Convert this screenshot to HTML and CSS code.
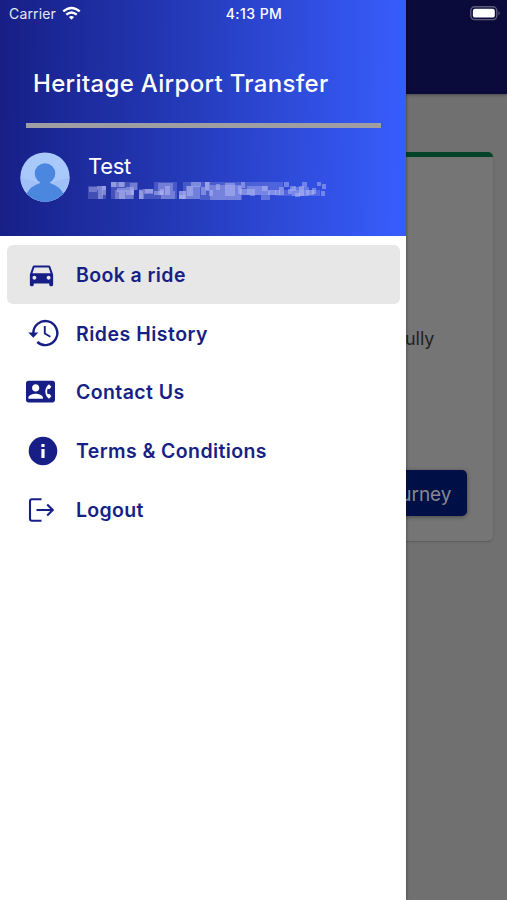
FILE: index.html
```html
<!DOCTYPE html>
<html lang="en">
<head>
<meta charset="utf-8">
<title>Heritage Airport Transfer</title>
<link rel="stylesheet" href="styles.css">
</head>
<body>
<main class="page">
  <div class="navbar"></div>
  <section class="card">
    <p class="message">ully</p>
    <div class="journey">urney</div>
  </section>
</main>
<aside class="drawer">
  <header class="drawer-header">
    <h1 class="title">Heritage Airport Transfer</h1>
    <div class="divider"></div>
    <div class="profile">
      <svg class="avatar" viewBox="0 0 50 50">
        <defs><clipPath id="round"><circle cx="25" cy="25" r="24.6"/></clipPath></defs>
        <g clip-path="url(#round)">
          <rect width="50" height="50" fill="#a9c9fb"/>
          <path d="M0 25L25 33L50 25V50H0Z" fill="#9fc1f7"/>
          <path d="M20 26H30V31Q40 34 44 43V50H6V43Q10 34 20 31Z" fill="#4c87df"/>
          <circle cx="25" cy="21.500" r="10.300" fill="#4c87df"/>
        </g>
      </svg>
      <div class="identity">
        <div class="name">Test</div>
        <svg class="masked" viewBox="0 0 240 20" shape-rendering="crispEdges">
          <g fill="#b3b9f2">
            <path opacity=".25" d="M0 5h18v13H0zM23 1h22v17H23zM43 1h7v8h-7zM51 8h22v10H51zM66 1h23v17H66zM95 1h22v17H95zM112 1h42v18H112zM154 1h41v13H154zM188 9h44v6H188z"/>
            <path opacity=".4" d="M1 6h8v5H1zM23 1h14v5H23zM27 9h19v9H27zM42 2h7v7h-7zM51 10h5v8H51zM55 8h10v5H55zM70 2h15v12H70zM73 10h14v8H73zM91 10h21v8H91zM98 5h14v10H98zM122 4h31v15H122zM159 5h20v9H159zM173 10h9v9H173zM204 6h17v9H204z"/>
            <path opacity=".5" d="M9 5h9v4H9zM10 5h5v13h-5zM23 1h5v5H23zM29 7h9v4H29zM31 10h6v8H31zM38 6h8v8H38zM51 9h4v9H51zM57 8h8v4H57zM66 10h9v4H66zM77 5h5v9H77zM91 10h7v8H91zM99 5h6v10H99zM103 1h10v5H103zM113 6h5v8H113zM117 1h5v9H117zM121 9h4v6H121zM137 2h10v13H137zM152 8h10v6H152zM162 8h5v7H162zM174 5h6v5H174zM180 9h8v5H180zM191 6h5v8H191zM202 5h6v5H202zM211 5h5v10H211zM218 9h8v5H218z"/>
            <path opacity=".5" d="M14 5h4v9H14zM31 1h5v5H31zM43 9h3v5H43zM72 8h4v6H72zM91 14h6v4H91zM117 1h4v8H117zM128 3h4v6H128zM150 5h4v8H150zM153 1h4v6H153zM187 9h5v5H187zM196 1h5v5H196zM200 8h4v5H200zM207 12h5v4H207zM214 1h5v5H214zM224 7h4v6H224zM229 1h4v4H229zM234 3h4v5H234zM233 10h4v5H233z"/>
          </g>
        </svg>
      </div>
    </div>
  </header>
  <nav class="menu">
    <a class="item active">
      <svg class="icon car" viewBox="0 0 24 24"><path fill-rule="evenodd" d="M18.920 6.010C18.720 5.420 18.160 5 17.500 5h-11c-.66 0-1.210.42-1.420 1.010L3 12v8c0 .55.45 1 1 1h1c.55 0 1-.45 1-1v-1h12v1c0 .55.45 1 1 1h1c.55 0 1-.45 1-1v-8l-2.080-5.990zM6.500 16c-.83 0-1.500-.67-1.500-1.500S5.670 13 6.500 13s1.500.67 1.500 1.500S7.330 16 6.500 16zm11 0c-.83 0-1.500-.67-1.500-1.500s.67-1.500 1.500-1.500 1.500.67 1.500 1.500-.67 1.500-1.500 1.500zM5 11l1.500-4.500h11L19 11H5z"/></svg>
      <span class="label book">Book a ride</span>
    </a>
    <a class="item">
      <svg class="icon history" viewBox="0 0 32 30"><path d="M5.300 15A12 12 0 1 1 9.300 24" fill="none" stroke="currentColor" stroke-width="2.400"/><path d="M.3 14.500H10.300L5.300 19.800Z"/><path d="M16.800 8V15.500L22.400 18.800" fill="none" stroke="currentColor" stroke-width="1.900"/></svg>
      <span class="label rides">Rides History</span>
    </a>
    <a class="item">
      <svg class="icon contact" viewBox="0 0 24 24"><path fill-rule="evenodd" d="M22 3H2C.9 3 0 3.900 0 5v14c0 1.100.9 2 2 2h20c1.100 0 1.990-.9 1.990-2L24 5c0-1.100-.9-2-2-2zM8 6c1.660 0 3 1.340 3 3s-1.340 3-3 3-3-1.340-3-3 1.340-3 3-3zm6 12H2v-1c0-2 4-3.100 6-3.100s6 1.100 6 3.100v1zm3.850-4h1.640L21 16l-1.990 1.990c-1.310-.98-2.280-2.380-2.730-3.990-.18-.64-.28-1.310-.28-2s.1-1.360.28-2c.45-1.620 1.420-3.010 2.730-3.990L21 8l-1.510 2h-1.640c-.22.630-.35 1.300-.35 2s.13 1.370.35 2z"/></svg>
      <span class="label us">Contact Us</span>
    </a>
    <a class="item">
      <svg class="icon info" viewBox="0 0 30 30"><circle cx="15" cy="15" r="14.300"/><path d="M13.400 8h3.200v3h-3.200zM13.400 13h3.200v9h-3.200z" fill="#fff"/></svg>
      <span class="label terms">Terms &amp; Conditions</span>
    </a>
    <a class="item">
      <svg class="icon logout" viewBox="0 0 26 26" fill="none"><path d="M13.500 2.200H4Q2 2.200 2 4.200V21.800Q2 23.800 4 23.800H13.500" stroke="currentColor" stroke-width="2.100"/><path d="M8.500 13H25M19.200 7.500L24.800 13L19.200 18.500" stroke="currentColor" stroke-width="2.100"/></svg>
      <span class="label out">Logout</span>
    </a>
  </nav>
</aside>
<div class="status">
  <div class="carrier"><span>Carrier</span>
    <svg class="wifi" viewBox="0 0 20 15"><g fill="none" stroke="#fff" stroke-width="2.500"><path d="M1.300 5.300Q10-2 18.700 5.300"/><path d="M4.500 8.700Q10 4.100 15.500 8.700"/></g><path d="M7.200 11.100Q10 8.900 12.800 11.100L10 14Z" fill="#fff"/></svg>
  </div>
  <div class="time">4:13 PM</div>
  <svg class="battery" viewBox="0 0 31 15"><rect x=".8" y=".8" width="26" height="12.800" rx="3.800" fill="none" stroke="#5c5b78" stroke-width="1.400"/><rect x="2.900" y="2.800" width="21.900" height="8.800" rx="2.200" fill="#fff"/><path d="M28.500 5Q31 7.200 28.500 9.400Z" fill="#5c5b78"/></svg>
</div>
</body>
</html>
```
FILE: styles.css
```css
* { box-sizing: border-box; }
body {
  margin: 0;
  width: 507px;
  height: 900px;
  position: relative;
  overflow: hidden;
  font-family: Inter, "Liberation Sans", sans-serif;
}
.page { height: 900px; background: #707070; }
.navbar { height: 94px; background: #0a0b3b; box-shadow: 0 1px 3px rgba(0, 0, 0, .35); }
.card {
  display: flex;
  flex-direction: column;
  align-items: flex-end;
  height: 389px;
  margin: 58px 14.500px 0;
  padding-right: 26px;
  border-top: 5px solid #054328;
  border-radius: 5px;
  background: #757575;
  box-shadow: 0 1px 2px rgba(0, 0, 0, .2);
}
.message {
  margin: 170px 32px 0 0;
  font-size: 18px;
  line-height: 24px;
  color: #222;
}
.journey {
  width: 180px;
  height: 46px;
  margin-top: 119px;
  padding-right: 15px;
  border-radius: 5px;
  background: #001047;
  box-shadow: 0 1px 4px rgba(0, 0, 0, .4);
  color: #858891;
  font-size: 19px;
  line-height: 49px;
  text-align: right;
}
.drawer {
  position: absolute;
  top: 0;
  left: 0;
  width: 406px;
  height: 900px;
  background: #fff;
  box-shadow: 0 0 3px rgba(0, 0, 0, .5);
}
.drawer-header {
  height: 235.500px;
  padding-top: 68px;
  background: linear-gradient(91deg, #171f86 0%, #2338b5 42%, #385cfb 98%);
  color: #fff;
}
.title {
  margin: 0 0 0 33px;
  font-size: 24px;
  line-height: 32px;
  font-weight: 500;
  letter-spacing: .32px;
  white-space: nowrap;
}
.divider { height: 5px; margin: 23px 25px 0 26px; background: #9e9ea3; }
.profile { display: flex; gap: 18px; padding: 24px 0 0 20px; }
.avatar { width: 50px; height: 50px; }
.name { font-size: 22px; line-height: 29px; letter-spacing: -.3px; }
.masked { display: block; width: 240px; height: 20px; }
.menu { padding: 9.500px 6.500px 0 7px; }
.item {
  display: flex;
  align-items: center;
  height: 58.600px;
  border-radius: 6px;
  color: #171f86;
}
.active { background: #e7e7e7; }
.icon { flex: none; fill: currentColor; }
.car { width: 31px; height: 31px; margin: 0 19px; }
.history { width: 32px; height: 30px; margin: 0 16px 0 21px; }
.contact { width: 29px; height: 29px; margin: 1px 21px 0 19px; }
.info { width: 30px; height: 30px; margin: 1px 18px 0 21px; }
.logout { fill: none; width: 26px; height: 26px; margin: 2px 22.500px 0 20.500px; }
.label {
  padding-top: 2px;
  font-size: 19.500px;
  font-weight: 600;
  line-height: 28px;
  letter-spacing: .4px;
  white-space: nowrap;
}
.rides { letter-spacing: .5px; }
.out { letter-spacing: .3px; }
.status {
  position: absolute;
  top: 0;
  left: 0;
  display: grid;
  grid-template-columns: 1fr auto 1fr;
  align-items: center;
  width: 507px;
  height: 27px;
  padding: 0 6px 0 9px;
  color: #fff;
  font-size: 14px;
}
.carrier { display: flex; align-items: center; gap: 6px; color: #e5e7fa; letter-spacing: .15px; }
.wifi { width: 19px; height: 15px; }
.time { margin-right: 2px; font-weight: 500; letter-spacing: .45px; }
.battery { justify-self: end; width: 31px; height: 15px; }
```
